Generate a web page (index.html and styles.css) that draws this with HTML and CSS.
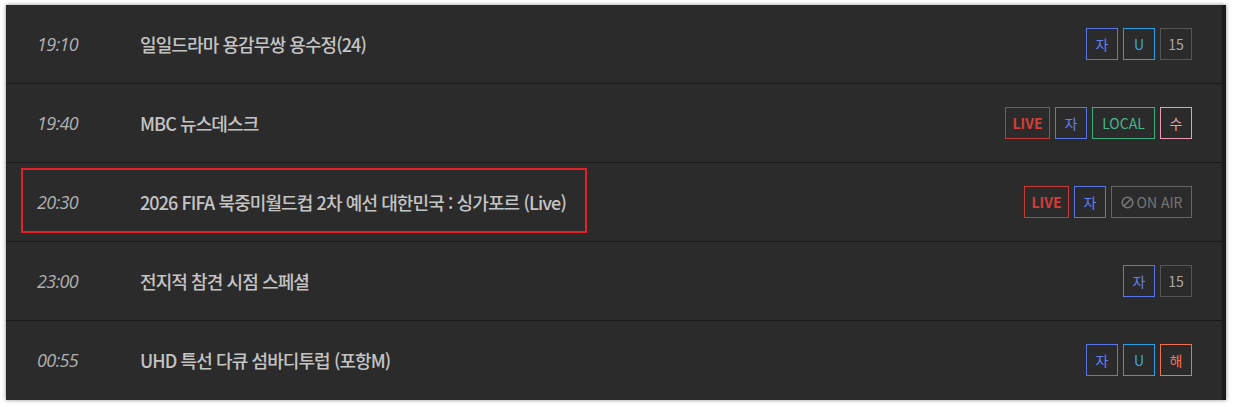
FILE: index.html
```html
<!DOCTYPE html>
<html lang="ko">
<head>
<meta charset="utf-8">
<link rel="stylesheet" href="styles.css">
</head>
<body>
<div class="panel">
  <div class="row">
    <span class="time">19:10</span>
    <span class="title">일일드라마 용감무쌍 용수정(24)</span>
    <span class="badges">
      <span class="badge b-ja">자</span>
      <span class="badge b-u">U</span>
      <span class="badge b-age">15</span>
    </span>
  </div>
  <div class="row">
    <span class="time">19:40</span>
    <span class="title">MBC 뉴스데스크</span>
    <span class="badges">
      <span class="badge wide b-live">LIVE</span>
      <span class="badge b-ja">자</span>
      <span class="badge wide b-local">LOCAL</span>
      <span class="badge b-su">수</span>
    </span>
  </div>
  <div class="row">
    <span class="time">20:30</span>
    <span class="title">2026 FIFA 북중미월드컵 2차 예선 대한민국 : 싱가포르 (Live)</span>
    <span class="badges">
      <span class="badge wide b-live">LIVE</span>
      <span class="badge b-ja">자</span>
      <span class="badge wide b-onair"><svg class="noicon" width="13" height="13" viewBox="0 0 13 13"><circle cx="6.5" cy="6.5" r="5.3" fill="none" stroke="currentColor" stroke-width="1.6"/><line x1="2.8" y1="10.2" x2="10.2" y2="2.8" stroke="currentColor" stroke-width="1.6"/></svg>ON AIR</span>
    </span>
    <span class="highlight"></span>
  </div>
  <div class="row">
    <span class="time">23:00</span>
    <span class="title">전지적 참견 시점 스페셜</span>
    <span class="badges">
      <span class="badge b-ja">자</span>
      <span class="badge b-age">15</span>
    </span>
  </div>
  <div class="row">
    <span class="time">00:55</span>
    <span class="title">UHD 특선 다큐 섬바디투럽 (포항M)</span>
    <span class="badges">
      <span class="badge b-ja">자</span>
      <span class="badge b-u">U</span>
      <span class="badge b-hae">해</span>
    </span>
  </div>
</div>
</body>
</html>
```
FILE: styles.css
```css
html, body {
  margin: 0;
  padding: 0;
  background: #ffffff;
}
body {
  padding: 5px 7px 7px 6px;
  font-family: "Noto Sans CJK KR", "Noto Sans", sans-serif;
}
.panel {
  width: 1216px;
  background: #2b2b2b;
  border-right: 4px solid #1c1c1c;
  box-shadow: 0 0 4px rgba(0, 0, 0, 0.45);
  display: flex;
  flex-direction: column;
}
.row {
  position: relative;
  height: 78px;
  border-bottom: 1px solid #1a1a1a;
  display: flex;
  align-items: center;
  padding: 0 30px 0 31px;
}
.row:last-child {
  border-bottom: 1px solid #2b2b2b;
}
.time {
  width: 103px;
  flex: none;
  font-family: "Open Sans", "Noto Sans", sans-serif;
  font-style: italic;
  font-size: 18px;
  letter-spacing: -0.6px;
  color: #b0b0b0;
}
.title {
  flex: 1;
  font-size: 18px;
  font-weight: 500;
  letter-spacing: -0.9px;
  color: #c4c4c4;
  white-space: nowrap;
}
.badges {
  display: flex;
  gap: 5px;
  flex: none;
}
.badge {
  box-sizing: border-box;
  height: 32px;
  min-width: 32px;
  border: 1px solid;
  display: flex;
  align-items: center;
  justify-content: center;
  font-size: 14px;
  line-height: 1;
}
.badge.wide {
  padding: 0 8px;
}
.b-ja { border-color: #5a75e6; color: #6480ee; }
.b-u { border-color: #2a9ee0; color: #3aa6e6; }
.b-age { border-color: #555555; color: #a8a8a8; }
.b-live { border-color: #c83a36; color: #d63c38; font-weight: bold; width: 45px; padding: 0; }
.b-local { border-color: #3cad7c; color: #44b888; width: 63px; padding: 0; }
.b-su { border-color: #e89ab0; color: #e8a0b4; }
.b-hae { border-color: #f0714e; color: #f27452; }
.b-onair {
  border-color: #666666;
  color: #767676;
  width: 81px;
  padding: 0;
  gap: 3px;
}
.noicon {
  display: block;
}
.highlight {
  position: absolute;
  left: 15px;
  top: 5px;
  width: 562px;
  height: 61px;
  border: 2px solid #e3212b;
}
```
